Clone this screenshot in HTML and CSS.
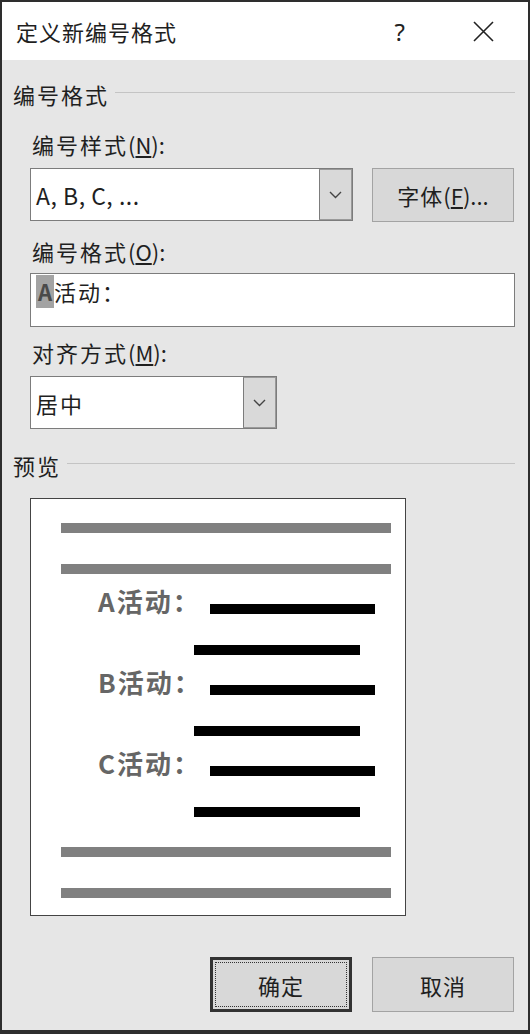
FILE: index.html
```html
<!DOCTYPE html>
<html>
<head>
    <title>定义新编号格式</title>
    <meta charset="UTF-8">
    <link rel="stylesheet" href="styles.css">
</head>
<body>
    <div class="dialog">
        <div class="titlebar">
            <span class="title">定义新编号格式</span>
            <span class="help">?</span>
            <span class="close">
                <svg width="21" height="21" viewBox="0 0 21 21"><path d="M1 1L20 20M20 1L1 20" stroke="#222" stroke-width="1.6" fill="none"/></svg>
            </span>
        </div>

        <div class="content">
            <div class="group-title"><span class="cjk">编号格式</span><i class="rule"></i></div>

            <div class="field-label"><span class="cjk">编号样式</span>(<u>N</u>):</div>
            <div class="row">
                <div class="combo combo-wide">
                    <span class="combo-text">A, B, C, ...</span>
                    <span class="combo-btn">
                        <svg width="13" height="8" viewBox="0 0 13 8"><path d="M1 1l5.5 5.5L12 1" fill="none" stroke="#444" stroke-width="1.4"/></svg>
                    </span>
                </div>
                <button class="btn btn-font"><span class="cjk-tight">字体</span>(<u>F</u>)...</button>
            </div>

            <div class="field-label label-o"><span class="cjk">编号格式</span>(<u>O</u>):</div>
            <div class="format-input"><span class="hl">A</span><span class="cjk">活动：</span></div>

            <div class="field-label label-m"><span class="cjk">对齐方式</span>(<u>M</u>):</div>
            <div class="combo combo-narrow">
                <span class="combo-text"><span class="cjk">居中</span></span>
                <span class="combo-btn">
                    <svg width="13" height="8" viewBox="0 0 13 8"><path d="M1 1l5.5 5.5L12 1" fill="none" stroke="#444" stroke-width="1.4"/></svg>
                </span>
            </div>

            <div class="group-title group-preview"><span class="cjk">预览</span><i class="rule"></i></div>

            <div class="preview">
                <div class="bar bar-gray"></div>
                <div class="bar bar-gray"></div>
                <div class="entry"><span class="entry-label">A活动：</span><div class="bar bar-black"></div></div>
                <div class="bar bar-indent"></div>
                <div class="entry"><span class="entry-label">B活动：</span><div class="bar bar-black"></div></div>
                <div class="bar bar-indent"></div>
                <div class="entry"><span class="entry-label">C活动：</span><div class="bar bar-black"></div></div>
                <div class="bar bar-indent"></div>
                <div class="bar bar-gray"></div>
                <div class="bar bar-gray"></div>
            </div>
        </div>

        <div class="footer">
            <button class="btn btn-default"><span class="cjk-tight">确定</span></button>
            <button class="btn"><span class="cjk-tight">取消</span></button>
        </div>
    </div>
</body>
</html>
```

FILE: styles.css
```css
* {
    box-sizing: border-box;
}
body {
    margin: 0;
    background: #fff;
}
.dialog {
    width: 530px;
    height: 1034px;
    border: 2px solid #2e2e2e;
    border-bottom-width: 4px;
    background: #e6e6e6;
    display: flex;
    flex-direction: column;
    font-family: "Noto Sans CJK SC", "Noto Sans", sans-serif;
    color: #1f1f1f;
}
.titlebar {
    height: 58px;
    flex: none;
    background: #fff;
    display: flex;
    align-items: center;
    padding-left: 14px;
}
.title {
    font-size: 22px;
    letter-spacing: 1px;
}
.help {
    margin-left: auto;
    font-family: "Noto Sans", sans-serif;
    font-size: 24px;
    color: #222;
}
.close {
    display: flex;
    margin-left: 68px;
    margin-right: 34px;
}
.content {
    padding: 0 13px 0 11px;
}
.cjk {
    letter-spacing: 2px;
}
.cjk-tight {
    letter-spacing: 1px;
}
.group-title {
    display: flex;
    align-items: center;
    height: 24px;
    margin-top: 22px;
    font-size: 22px;
}
.group-title .rule {
    flex: 1;
    height: 1px;
    background: #c4c4c4;
    margin: 0 0 4px 6px;
}
.group-preview {
    margin-top: 24px;
}
.field-label {
    margin: 26px 0 0 19px;
    line-height: 24px;
    font-size: 22px;
}
.label-o {
    margin-top: 17px;
}
.label-m {
    margin-top: 13px;
}
.row {
    display: flex;
    align-items: flex-start;
    gap: 19px;
    margin: 12px 0 0 17px;
}
.combo {
    display: flex;
    height: 53px;
    border: 1px solid #7c7c7c;
    background: #fff;
}
.combo-wide {
    width: 323px;
}
.combo-narrow {
    width: 247px;
    margin: 12px 0 0 17px;
}
.combo-text {
    flex: 1;
    display: flex;
    align-items: center;
    padding-left: 5px;
    font-size: 23px;
    letter-spacing: 0.5px;
}
.combo-narrow .combo-text {
    font-size: 22px;
    letter-spacing: 0;
}
.combo-btn {
    width: 33px;
    background: #d9d9d9;
    border: 1px solid #9a9a9a;
    border-left-color: #7c7c7c;
    display: flex;
    align-items: center;
    justify-content: center;
}
.btn {
    width: 142px;
    height: 54px;
    padding: 0;
    background: #d8d8d8;
    border: 1px solid #a3a3a3;
    font-family: inherit;
    font-size: 22px;
    color: #1f1f1f;
}
.format-input {
    width: 485px;
    height: 54px;
    margin: 10px 0 0 17px;
    padding: 1px 0 0 5px;
    border: 1px solid #7c7c7c;
    background: #fff;
    font-size: 22px;
    line-height: 33px;
}
.hl {
    display: inline-block;
    padding: 0 2px;
    background: #a3a3a3;
    color: #4a4a4a;
    font-weight: bold;
}
.preview {
    width: 376px;
    height: 418px;
    margin: 21px 0 0 17px;
    padding-top: 24px;
    background: #fff;
    border: 1px solid #444;
    display: flex;
    flex-direction: column;
    gap: 30.5px;
}
.bar {
    height: 10px;
    flex: none;
}
.bar-gray {
    width: 330px;
    margin-left: 30px;
    background: #808080;
}
.entry {
    display: flex;
    align-items: flex-start;
    height: 10px;
    flex: none;
}
.entry-label {
    width: 179px;
    flex: none;
    padding-left: 67px;
    margin-top: -14px;
    line-height: 22px;
    font-size: 26px;
    font-weight: bold;
    letter-spacing: 2px;
    color: #666;
    white-space: nowrap;
}
.bar-black {
    width: 165px;
    background: #000;
}
.bar-indent {
    width: 166px;
    margin-left: 163px;
    background: #000;
}
.footer {
    margin-top: auto;
    display: flex;
    justify-content: flex-end;
    gap: 20px;
    padding: 0 14px 18px 0;
}
.footer .btn {
    height: 55px;
}
.btn-default {
    border: 3px solid #333;
    outline: 1px dotted #333;
    outline-offset: -6px;
}
```
